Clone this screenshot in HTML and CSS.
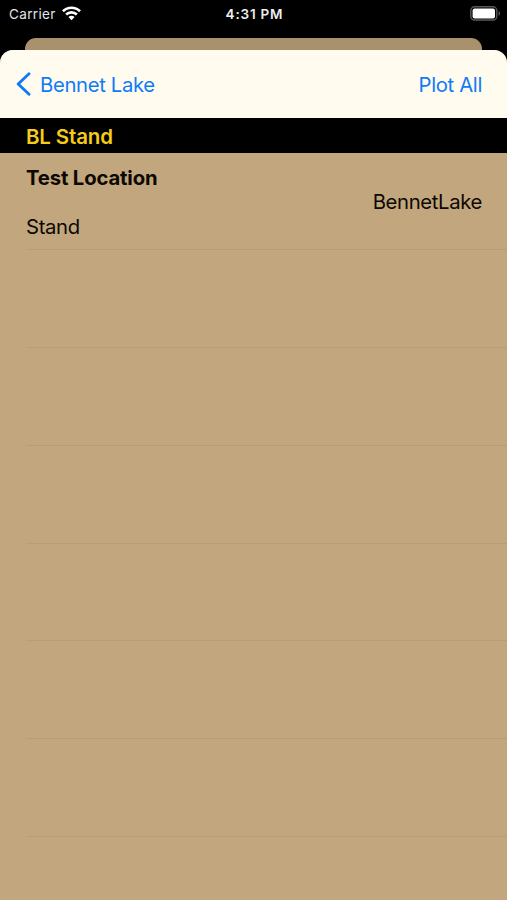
FILE: index.html
```html
<!DOCTYPE html>
<html lang="en">
<head>
  <meta charset="UTF-8" />
  <meta name="viewport" content="width=device-width, initial-scale=1" />
  <title>Bennet Lake</title>
  <link rel="stylesheet" href="styles.css">
</head>
<body>
  <div class="screen">
    <header class="status-bar">
      <div class="carrier">
        <span class="carrier-name">Carrier</span>
        <svg class="wifi" width="19" height="15" viewBox="0 0 18 14" fill="none" stroke="#fff" stroke-width="2.5">
          <path d="M0.9 4.9 C5.4 0.4 12.6 0.4 17.1 4.9" />
          <path d="M3.9 8 C6.8 5.2 11.2 5.2 14.1 8" />
          <path d="M6.1 10.3 C7.8 8.8 10.2 8.8 11.9 10.3 L9 13.3 Z" fill="#fff" stroke="none" />
        </svg>
      </div>
      <span class="time">4:31 PM</span>
      <svg class="battery" width="31" height="15" viewBox="0 0 31 15">
        <rect x="0.8" y="0.8" width="26" height="13.2" rx="3.8" fill="#000" stroke="#59595b" stroke-width="1.4" />
        <rect x="2.6" y="2.6" width="22.4" height="9.8" rx="2" fill="#fff" />
        <path d="M28.6 5 C30.6 5.8 30.6 9 28.6 9.8 Z" fill="#59595b" />
      </svg>
    </header>

    <div class="back-card"></div>

    <main class="sheet">
      <nav class="nav-bar">
        <a class="back">
          <svg width="15" height="24" viewBox="0 0 15 24" fill="none" stroke="currentColor" stroke-width="2.9" stroke-linecap="round" stroke-linejoin="round">
            <path d="M13 1.7 L2.2 12 L13 22.3" />
          </svg>
          <span class="back-label">Bennet Lake</span>
        </a>
        <a class="plot-all">Plot All</a>
      </nav>

      <h2 class="section-title">BL Stand</h2>

      <div class="table">
        <div class="row">
          <div class="row-title">Test Location</div>
          <div class="row-place">BennetLake</div>
          <div class="row-type">Stand</div>
        </div>
        <div class="row"></div>
        <div class="row"></div>
        <div class="row"></div>
        <div class="row"></div>
        <div class="row"></div>
        <div class="row"></div>
      </div>
    </main>
  </div>
</body>
</html>
```
FILE: styles.css
```css
* {
  box-sizing: border-box;
}
body {
  margin: 0;
  background: #000;
  font-family: Inter, "Liberation Sans", sans-serif;
  color: #0d0802;
}
.screen {
  display: flex;
  flex-direction: column;
  height: 900px;
  overflow: hidden;
}
.status-bar {
  display: grid;
  grid-template-columns: 1fr auto 1fr;
  align-items: center;
  flex: none;
  height: 38px;
  padding: 0 6px 11px 9px;
  color: #fff;
}
.carrier {
  display: flex;
  align-items: center;
  gap: 6px;
}
.carrier-name {
  font-size: 13.5px;
  color: #e4e4e4;
  letter-spacing: 0.35px;
}
.wifi {
  margin-top: -1px;
}
.time {
  margin-right: 1px;
  font-size: 13.5px;
  font-weight: 600;
  letter-spacing: 0.8px;
  color: #eee;
}
.battery {
  justify-self: end;
}
.back-card {
  flex: none;
  height: 12px;
  margin: 0 25px;
  border-radius: 11px 11px 0 0;
  background: #aa916d;
}
.sheet {
  display: flex;
  flex-direction: column;
  flex: 1;
  border-radius: 13px 13px 0 0;
  background: #c2a67d;
  overflow: hidden;
}
.nav-bar {
  display: flex;
  align-items: center;
  justify-content: space-between;
  flex: none;
  height: 68px;
  padding: 0 25px 0 16px;
  background: #fffbef;
  color: #0f7bf5;
  font-size: 20.3px;
  letter-spacing: -0.35px;
}
.back {
  display: flex;
  align-items: center;
  gap: 9px;
}
.section-title {
  flex: none;
  height: 34.5px;
  margin: 0;
  padding-left: 26px;
  background: #000;
  color: #f5cc16;
  font-size: 20.5px;
  font-weight: 600;
  letter-spacing: -0.15px;
  line-height: 37px;
}
.row {
  height: 97.8px;
  margin-left: 26px;
  padding: 13px 25px 0 0;
  border-bottom: 1px solid #b89d75;
  font-size: 20.3px;
  letter-spacing: -0.35px;
  line-height: 24.5px;
}
.row-title {
  font-weight: 700;
  letter-spacing: -0.15px;
}
.row-place {
  text-align: right;
}
```
